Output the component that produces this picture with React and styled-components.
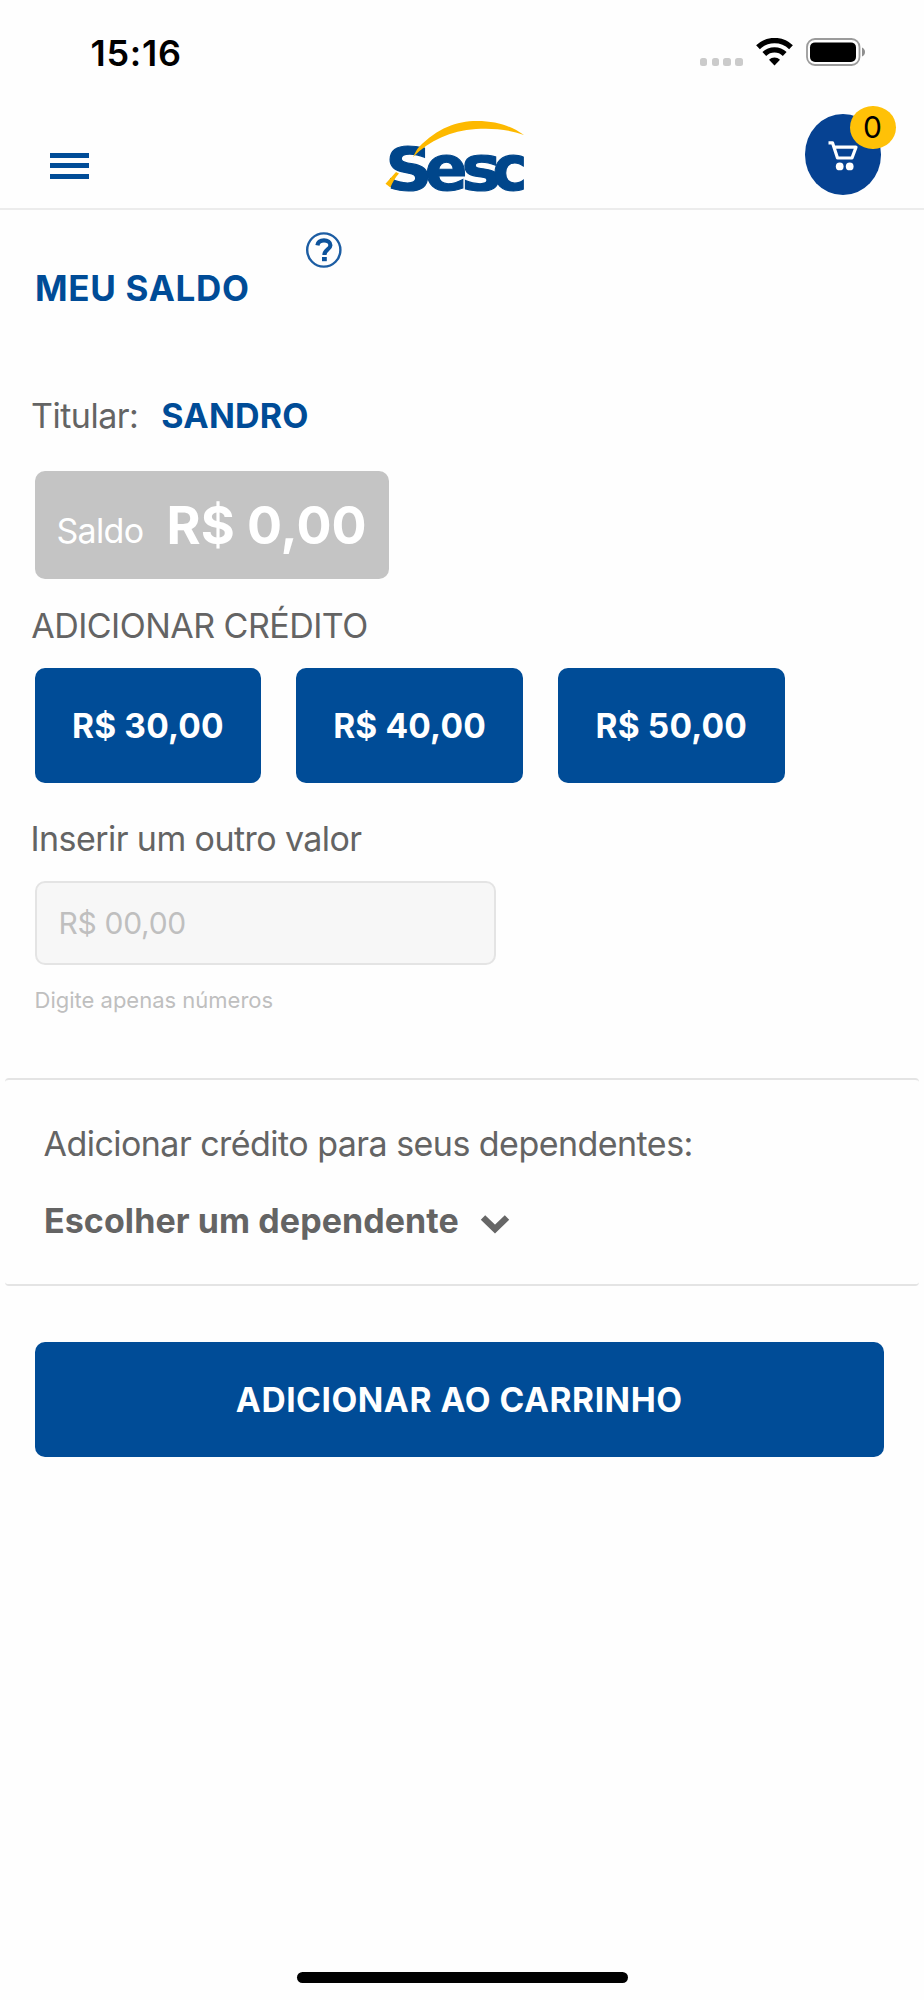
import React from "react";
import styled, { createGlobalStyle } from "styled-components";

// Styled Components

const GlobalStyle = createGlobalStyle`
  * {
    box-sizing: border-box;
  }

  body {
    margin: 0;
    background: #fefefe;
    font-family: Inter, "Liberation Sans", sans-serif;
    color: #646464;
  }

  svg {
    display: block;
    flex: none;
  }
`;

const Screen = styled.div`
  display: flex;
  flex-direction: column;
  width: 924px;
  height: 2000px;
  overflow: hidden;
`;

const StatusBar = styled.div`
  display: flex;
  justify-content: space-between;
  height: 105px;
  padding: 33px 58.5px 0 90.5px;
  color: #000;
`;

const Clock = styled.div`
  font-size: 36px;
  font-weight: 600;
  line-height: 40px;
  letter-spacing: 0.73px;
`;

const StatusIcons = styled.div`
  display: flex;
  align-items: flex-start;
`;

const SignalDots = styled.div`
  display: flex;
  gap: 4.2px;
  margin: 25px 13px 0 0;

  span {
    width: 7.5px;
    height: 8px;
    border-radius: 2.5px;
    background: #cbcbcb;
  }
`;

const WifiIcon = styled.svg`
  margin: 5px 13px 0 0;
`;

const BatteryIcon = styled.svg`
  margin-top: 5px;
`;

const Header = styled.header`
  display: flex;
  justify-content: space-between;
  height: 104.5px;
  padding: 0 43px 0 49.5px;
  border-bottom: 2.5px solid #ececec;
`;

const MenuButton = styled.button`
  display: flex;
  flex-direction: column;
  gap: 5.8px;
  width: 39.5px;
  margin: 47.5px 0 0;
  padding: 0;
  border: none;
  background: none;

  span {
    height: 5px;
    background: #004c97;
  }
`;

const Logo = styled.svg`
  margin: 13px 0 0 15px;
  overflow: visible;
`;

const CartButton = styled.button`
  position: relative;
  display: flex;
  align-items: flex-start;
  width: 76px;
  height: 80.5px;
  margin: 9px 0 0;
  padding: 25.5px 0 0 22px;
  border: none;
  border-radius: 50%;
  background: #064292;
`;

const Badge = styled.span`
  position: absolute;
  top: -8.5px;
  left: 45px;
  width: 46px;
  height: 43.5px;
  border-radius: 50%;
  background: #ffc107;
  color: #000;
  font-family: Inter, sans-serif;
  font-size: 30px;
  line-height: 42.5px;
  text-align: center;
  text-indent: -1px;
`;

const Content = styled.main`
  display: flex;
  flex-direction: column;
`;

const TitleRow = styled.div`
  display: flex;
  align-items: flex-start;
  padding: 22.5px 0 0 35px;
`;

const Title = styled.h1`
  width: 270.5px;
  margin: 36px 0 0;
  color: #004c97;
  font-size: 35px;
  font-weight: 700;
  line-height: 40px;
  letter-spacing: 0.7px;
`;

const Holder = styled.div`
  display: flex;
  gap: 23px;
  margin: 88px 0 0 31px;
  font-size: 34px;
  line-height: 40px;
  letter-spacing: -0.5px;

  strong {
    color: #004c97;
    letter-spacing: 0.21px;
  }
`;

const Balance = styled.div`
  display: flex;
  align-items: center;
  width: 354.5px;
  height: 108px;
  margin: 35px 0 0 34.5px;
  padding: 0 22px;
  border-radius: 10px;
  background: #c4c4c4;
  color: #fff;
`;

const BalanceLabel = styled.span`
  width: 110px;
  padding-top: 12px;
  font-size: 34px;
  line-height: 40px;
  letter-spacing: -0.7px;
`;

const BalanceValue = styled.strong`
  padding-top: 2px;
  font-size: 52px;
  line-height: 60px;
  white-space: nowrap;
`;

const Label = styled.div`
  margin: ${(props) => props.$top}px 0 0 ${(props) => props.$left}px;
  font-size: 34px;
  line-height: 40px;
  letter-spacing: ${(props) => props.$spacing}px;
`;

const AmountRow = styled.div`
  display: flex;
  gap: 34.9px;
  margin: 22px 0 0 34.5px;
`;

const Button = styled.button`
  width: ${(props) => props.$width}px;
  height: 115.5px;
  padding: 2px 0 0;
  border: none;
  border-radius: 10px;
  background: #004c97;
  color: #fff;
  font-family: inherit;
  font-size: 33.5px;
  font-weight: 700;
  letter-spacing: ${(props) => props.$spacing}px;
`;

const AmountInput = styled.input`
  width: 461.5px;
  height: 84px;
  margin: 22px 0 0 34.5px;
  padding: 0 0 0 22px;
  border: 2px solid #e4e4e4;
  border-radius: 10px;
  background: #f7f7f7;
  font-family: inherit;
  font-size: 30px;
  letter-spacing: -0.3px;

  &::placeholder {
    color: #bfbfbf;
    opacity: 1;
  }
`;

const Hint = styled.div`
  margin: 20.5px 0 0 34.5px;
  color: #bfbfbf;
  font-size: 22px;
  line-height: 30px;
`;

const Dependents = styled.section`
  height: 208.5px;
  margin: 62.5px 5px 0;
  padding: 0 39px;
  border-top: 2px solid #e4e4e4;
  border-bottom: 2px solid #e4e4e4;
  border-radius: 4px;
`;

const DependentSelect = styled.div`
  display: flex;
  align-items: center;
  gap: 21.5px;
  margin-top: 36.5px;
  font-size: 34px;
  font-weight: 700;
  line-height: 40px;
  letter-spacing: 0.08px;

  svg {
    margin-top: 6px;
  }
`;

const Footer = styled.div`
  padding: 55.5px 0 0 34.5px;
`;

const HomeIndicator = styled.div`
  width: 331px;
  height: 11px;
  margin: auto 0 17.5px 297px;
  border-radius: 6px;
  background: #000;
`;

const amounts = ["R$ 30,00", "R$ 40,00", "R$ 50,00"];

const SescLogo = () => (
  <Logo width="140" height="78" viewBox="0 0 140 78">
    <g
      fill="#00468b"
      stroke="#00468b"
      strokeWidth="1.2"
      fontFamily="DejaVu Sans"
      fontWeight="700"
      fontSize="63"
    >
      <text transform="translate(0.6 72.2) scale(1.12 1)" fontSize="58">
        S
      </text>
      <text transform="translate(39.8 71.8)">e</text>
      <text transform="translate(76.5 71.8) scale(1.06 1)">s</text>
      <text transform="translate(107.4 71.8) scale(0.93 1)">c</text>
    </g>
    <path d="M0 66 L8 57 L0 57 Z M0 64 L6 69.5 L3.5 76 L0 76 Z" fill="#fefefe" />
    <path
      d="M28 39 C30 35 32 31 34 29 C53 10 71 3 92 3 C112 3 126 8 139 17 C122 11 106 10 91 11 C65 13 45 22 28 39 Z"
      fill="#fdb900"
    />
    <path d="M0.5 65.7 L11 54 L14 55.5 C10 60 7.5 64 5.4 69.5 Z" fill="#fdb900" />
  </Logo>
);

const App = () => {
  return (
    <Screen>
      <GlobalStyle />
      <StatusBar>
        <Clock>15:16</Clock>
        <StatusIcons>
          <SignalDots>
            <span />
            <span />
            <span />
            <span />
          </SignalDots>
          <WifiIcon width="37" height="28" viewBox="0 0 37 28">
            <g fill="none" stroke="#000" strokeWidth="5.4">
              <path d="M2 9.2 A23.8 23.8 0 0 1 35 9.2" />
              <path d="M8.3 16 A14.6 14.6 0 0 1 28.7 16" />
            </g>
            <path
              d="M13 21.8 A8 8 0 0 1 24 21.8 L18.5 27.4 Z"
              fill="#000"
            />
          </WifiIcon>
          <BatteryIcon width="60" height="28" viewBox="0 0 60 28">
            <rect
              x="1"
              y="1"
              width="52.5"
              height="26"
              rx="8"
              fill="none"
              stroke="#9b9b9b"
              strokeWidth="1.8"
            />
            <rect x="4" y="4.4" width="46" height="19.6" rx="5" fill="#000" />
            <path d="M56 9.5 Q59 11 59 14 Q59 17 56 18.5 Z" fill="#8e8e8e" />
          </BatteryIcon>
        </StatusIcons>
      </StatusBar>

      <Header>
        <MenuButton aria-label="Menu">
          <span />
          <span />
          <span />
        </MenuButton>
        <SescLogo />
        <CartButton aria-label="Carrinho">
          <svg width="32" height="32" viewBox="0 0 32 32">
            <path
              d="M1.5 2.8 H5.5 L10.5 18 H25 L29 7.2 H7"
              fill="none"
              stroke="#fff"
              strokeWidth="3.2"
              strokeLinejoin="round"
            />
            <circle cx="12.7" cy="26.4" r="3.9" fill="#fff" />
            <circle cx="22.7" cy="26.4" r="3.9" fill="#fff" />
          </svg>
          <Badge>0</Badge>
        </CartButton>
      </Header>

      <Content>
        <TitleRow>
          <Title>MEU SALDO</Title>
          <svg width="36" height="36" viewBox="0 0 36 36">
            <circle
              cx="17.8"
              cy="18"
              r="16.6"
              fill="none"
              stroke="#1c5da3"
              strokeWidth="2.4"
            />
            <path
              d="M11.4 13.4 C12 9.8 14.6 8.4 18 8.4 C21.6 8.4 24.4 10.2 24.4 13.2 C24.4 17.5 18.4 17.4 18.4 23"
              fill="none"
              stroke="#0d539c"
              strokeWidth="4.2"
            />
            <rect x="16" y="25" width="4.8" height="4.2" fill="#0d539c" />
          </svg>
        </TitleRow>

        <Holder>
          <span>Titular:</span>
          <strong>SANDRO</strong>
        </Holder>

        <Balance>
          <BalanceLabel>Saldo</BalanceLabel>
          <BalanceValue>R$ 0,00</BalanceValue>
        </Balance>

        <Label $top={26.5} $left={31.2} $spacing={-0.52}>
          ADICIONAR CRÉDITO
        </Label>

        <AmountRow>
          {amounts.map((amount) => (
            <Button key={amount} $width={226.8} $spacing={0.16}>
              {amount}
            </Button>
          ))}
        </AmountRow>

        <Label $top={35.5} $left={30.5} $spacing={-0.57}>
          Inserir um outro valor
        </Label>
        <AmountInput placeholder="R$ 00,00" />
        <Hint>Digite apenas números</Hint>

        <Dependents>
          <Label $top={44.5} $left={-0.5} $spacing={-0.54}>
            Adicionar crédito para seus dependentes:
          </Label>
          <DependentSelect>
            <span>Escolher um dependente</span>
            <svg width="30" height="22" viewBox="0 0 30 22">
              <path
                d="M3 4.5 L15 16 L27 4.5"
                fill="none"
                stroke="#666"
                strokeWidth="6.4"
              />
            </svg>
          </DependentSelect>
        </Dependents>

        <Footer>
          <Button $width={849.5} $spacing={0.56}>
            ADICIONAR AO CARRINHO
          </Button>
        </Footer>
      </Content>

      <HomeIndicator />
    </Screen>
  );
};

export default App;
